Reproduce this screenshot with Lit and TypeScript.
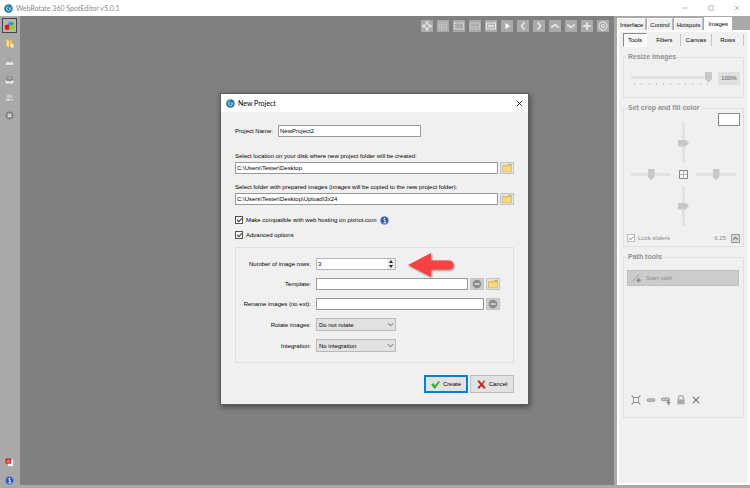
import { LitElement, html, svg, css, nothing } from "lit";
import { customElement, property } from "lit/decorators.js";

const glyphs: Record<string, unknown> = {
  logo: svg`<circle cx="8" cy="8" r="7.6" fill="#1d6f9c"/><path d="M3 5a6 6 0 0 1 6-3L7 6 4 9z" fill="#35b6a5"/><path d="M5 6v3a3 3 0 0 0 6 0V7H8" fill="none" stroke="#d9f1fa" stroke-width="1.6"/><path d="M12 4a6 6 0 0 1 0 8" fill="none" stroke="#4aa3d6" stroke-width="1.5"/>`,
  blocks: svg`<path d="M5 2l4-1 3 2-1 5H5z" fill="#3f9ff0"/><path d="M10 1l6 4-5 3z" fill="#1faa2c"/><path d="M0 7l6-1 2 2v7l-6 1-2-2z" fill="#e01818"/><path d="M8 9l5-2 3 2v5l-5 2-3-2z" fill="#83d321"/>`,
  book: svg`<path d="M2 1l6 1v13l-6-2z" fill="#f9dc8b" stroke="#d9a53c"/><path d="M8 2h5v11H8z" fill="#efc25a" stroke="#d9a53c"/><path d="M10 9h5v6h-5z" fill="#fff1c4"/>`,
  tray1: svg`<path d="M3 7l2-4h6l2 4 2 3v4H1v-4z" fill="#c8c8c8" stroke="#8c8c8c"/><circle cx="8" cy="5" r="3" fill="#aaa" stroke="#888"/><path d="M1 10h14v4H1z" fill="#e6e6e6"/>`,
  tray2: svg`<path d="M3 2h10l2 7v6H1V9z" fill="#8f8f8f"/><path d="M1 9l4 2h6l4-2v6H1z" fill="#ececec"/><path d="M6 4h4l-2 4z" fill="#ccc"/>`,
  drive: svg`<path d="M2 2h12v8H2z" fill="#c4c4c4" stroke="#a0a0a0"/><path d="M1 10h14v4H1z" fill="#ececec" stroke="#999"/><path d="M9 12h4" stroke="#888"/>`,
  closeDisc: svg`<circle cx="8" cy="8" r="6.5" fill="#8a8a8a" stroke="#777"/><path d="M5 5l6 6M11 5l-6 6" stroke="#eee" stroke-width="2"/>`,
  pdf: svg`<path d="M5 2h10v13H5z" fill="#fff" stroke="#999"/><path d="M1 1h10v9H1z" fill="#d51313"/><path d="M3 8l3-5 3 4H4" fill="none" stroke="#fff"/>`,
  info: svg`<circle cx="8" cy="8" r="7" fill="#2554c7" stroke="#8d9bd0"/><circle cx="8" cy="4.5" r="1.4" fill="#fff"/><path d="M6 7h3v5M6 12.2h5" fill="none" stroke="#fff" stroke-width="1.7"/>`,
  target: svg`<circle cx="8" cy="8" r="3"/><path d="M8 1v4M8 11v4M1 8h4M11 8h4M6 3h4M6 13h4M3 6v4M13 6v4"/>`,
  grid: svg`<path d="M3 3h10v10H3zM3 6.3h10M3 9.6h10M6.3 3v10M9.6 3v10" stroke-width=".8" opacity=".6"/>`,
  marquee: svg`<path d="M2 4h12v8H2z" stroke-dasharray="2 1.2"/>`,
  halfFrame: svg`<path d="M2 4h12v8H2zM4 9h8" stroke-width="1.2" opacity=".5"/>`,
  frame: svg`<path d="M2 4h12v8H2zM5 7h6v2H5z"/>`,
  play: svg`<path d="M6 4l6 4-6 4z" fill="#fff" stroke="none"/>`,
  left: svg`<path d="M10 3L6 8l4 5" stroke-width="2.2"/>`,
  right: svg`<path d="M6 3l4 5-4 5" stroke-width="2.2"/>`,
  up: svg`<path d="M3 10l5-4 5 4" stroke-width="2.2"/>`,
  down: svg`<path d="M3 6l5 4 5-4" stroke-width="2.2"/>`,
  chevron: svg`<path d="M2 5l6 6 6-6" stroke-width="1.8"/>`,
  plus: svg`<path d="M8 3v10M3 8h10" stroke-width="2.6"/>`,
  ring: svg`<circle cx="8" cy="8" r="5.4"/><circle cx="8" cy="8" r="2"/>`,
  folder: svg`<path d="M1 4h8l1-2h5v12H1z" fill="#efcb6c" stroke="#d6a846"/><path d="M1.500 6h13v7.500h-13z" fill="#f6d980"/><path d="M11 2.500h3" stroke="#6aa84f"/>`,
  minus: svg`<circle cx="8" cy="8" r="7" fill="#8b8b8b"/><path d="M4 8h8" stroke="#d8d8d8" stroke-width="2.6"/>`,
  check: svg`<path d="M1 8l3-2 3 4 7-8 1 2-8 11H6z" fill="#2fb52f" stroke="#1b8f22" stroke-width=".8"/>`,
  cross: svg`<path d="M1 2l3-1 4 5 5-5 1 1-4 5 5 7-3 1-4-5-4 5-3-1 5-6z" fill="#cf2020" stroke="#9c1515" stroke-width=".6"/>`,
  close: svg`<path d="M2 2l12 12M14 2L2 14" fill="none" stroke="currentColor" stroke-width="1.7"/>`,
  minimise: svg`<path d="M1 8h14" stroke="currentColor" stroke-width="1.5"/>`,
  maximise: svg`<path d="M2 2h12v12H2z" fill="none" stroke="currentColor" stroke-width="1.5"/>`,
  cells: svg`<path d="M1 1h14v14H1z" fill="#fff" stroke="#777" stroke-width="1.7"/><path d="M8 1v14M1 8h14" stroke="#aaa" stroke-width="1.7"/>`,
  caretBox: svg`<path d="M1 1h14v14H1z" fill="#ddd" stroke="#8c8c8c" stroke-width="1.6"/><path d="M4 10l4-4 4 4" fill="none" stroke="#777" stroke-width="2"/>`,
  pen: svg`<path d="M1 14c3 0 3-3 5-5l7-7" fill="none" stroke="#999" stroke-width="1.5"/><path d="M12 8v7M8.500 11.500h7" stroke="#888" stroke-width="2.6"/>`,
  bounds: svg`<path d="M4 4h8v8H4z" fill="none" stroke="#8b8b8b" stroke-width="1.4"/><path d="M1 1l3 3M15 1l-3 3M1 15l3-3M15 15l-3-3" stroke="#8b8b8b" stroke-width="2"/>`,
  link: svg`<rect x="1" y="5" width="14" height="6" rx="3" fill="#a6a6a6"/><path d="M4 8h3M9 8h3" stroke="#ddd" stroke-width="1.4"/>`,
  linkAdd: svg`<rect x="0" y="4" width="14" height="6" rx="3" fill="#a6a6a6"/><path d="M3 7h3M8 7h3" stroke="#ddd" stroke-width="1.4"/><path d="M12 8v8M9 12h6" stroke="#888" stroke-width="2.4"/>`,
  lock: svg`<path d="M4 8V5a4 4 0 0 1 8 0v3" fill="none" stroke="#aaa" stroke-width="2"/><path d="M2 7h12v8H2z" fill="#b0b0b0"/><path d="M6 8v6M10 8v6" stroke="#8e8e8e"/>`,
  crossGrey: svg`<path d="M3 3l10 10M13 3L3 13" stroke="#7d7d7d" stroke-width="2.2"/>`,
};

@customElement("ui-glyph")
export class UiGlyph extends LitElement {
  static styles = css`
    :host { display: block; width: 9px; height: 9px; flex: none; }
    svg { display: block; width: 100%; height: 100%; }
  `;
  @property() name = "";
  render() {
    return html`<svg viewBox="0 0 16 16" aria-hidden="true">${glyphs[this.name] ?? nothing}</svg>`;
  }
}

@customElement("app-root")
export class AppRoot extends LitElement {
  static styles = css`
    :host {
      --ui: "Liberation Sans", Arial, sans-serif;
      --title: Lato, sans-serif;
      display: flex;
      flex-direction: column;
      min-height: 100vh;
      position: relative;
      background: #a9a9a9;
      color: #000;
      font: 6px/10px var(--ui);
    }
    *, *::before, *::after { box-sizing: border-box; }
    button, input, select { font: inherit; color: inherit; margin: 0; padding: 0; border-radius: 0; }
    button { display: flex; align-items: center; justify-content: center; border: 0; background: none; }
    label { white-space: nowrap; }
    fieldset { min-width: 0; margin: 0; }

    .titlebar {
      display: flex; align-items: center; gap: 3px;
      height: 16px; padding: 0 10px 0 4px;
      background: #fff; color: #888; font: 7px/10px var(--title);
    }
    .titlebar h1 { flex: 1; margin: 0; font: inherit; }
    .window-buttons { display: flex; gap: 20px; }
    .window-buttons ui-glyph { width: 6px; height: 6px; }
    .work { flex: 1; display: flex; }

    .rail {
      width: 20px; display: flex; flex-direction: column; gap: 3px;
      padding: 2px 3px 0 2px;
    }
    .rail button { width: 15px; height: 15px; }
    .rail .current { border: 1px solid #444; background: #b5b5b5; }
    .rail .spacer { flex: 1; }

    .stage { flex: 1; min-width: 0; margin-bottom: 3px; background: #808080; padding: 4px 5px 0; }
    .stage-tools { display: flex; justify-content: flex-end; gap: 4px; }
    .stage-tools button { width: 12px; height: 12px; background: #aaa; }
    .stage-tools ui-glyph { width: 12px; height: 12px; fill: none; stroke: #e6e6e6; stroke-width: 1.5; }

    .side { width: 136px; display: flex; flex-direction: column; padding: 1px 0 3px 3px; }
    .tabs { display: flex; align-items: flex-end; height: 13px; gap: 1px; }
    .tabs button { height: 12px; padding: 0 2px; background: #f0f0f0; border: 1px solid #fff; border-right-color: #bbb; border-bottom: 0; }
    .tabs .open { height: 13px; background: #fff; border-color: #fff; padding: 0 3px; }
    .tabpage {
      flex: 1; display: flex; flex-direction: column; gap: 5px;
      background: #f0f0f0; border: 2px solid #fff; padding: 1px 4px 0;
    }
    .subtabs { display: flex; height: 14px; align-items: center; }
    .subtabs button { flex: 1; height: 12px; border-right: 1px solid #c4c4c4; }
    .subtabs .open { flex: none; width: 24px; height: 14px; border: 1px solid #fff; border-top-color: #888; border-left-color: #888; background: #f8f8f8; margin-right: 2px; }

    .group { border: 1px solid #e0e0e0; padding: 0 3px; color: #888; }
    .group legend { margin-left: 0; padding: 0 1px; font-size: 7px; font-weight: bold; color: #909090; }
    .resize { min-height: 46px; }
    .resize-row { display: flex; align-items: center; gap: 6px; padding: 9px 0 0 4px; }
    .resize-slider { flex: 1; }
    .ticks { display: flex; justify-content: space-between; padding: 0 4px 0 3px; }
    .ticks i { width: 1px; height: 2px; background: #c8c8c8; }
    .percent { width: 22px; height: 13px; background: #e0e0e0; color: #555; }

    input[type="range"] { appearance: none; display: block; width: 100%; height: 12px; background: none; }
    input[type="range"]::-webkit-slider-runnable-track {
      height: 3px; background: #e2e2e2;
    }
    input[type="range"]::-webkit-slider-thumb {
      appearance: none; width: 7px; height: 11px; margin-top: -4px; background: #c8c8c8;
      clip-path: polygon(0 0, 100% 0, 100% 70%, 50% 100%, 0 70%);
    }
    input.upright { writing-mode: vertical-lr; width: 12px; height: 40px; }
    input.upright::-webkit-slider-runnable-track { width: 3px; height: 100%; }
    input.upright::-webkit-slider-thumb {
      width: 11px; height: 7px; margin: 0 0 0 -4px;
      clip-path: polygon(0 0, 70% 0, 100% 50%, 70% 100%, 0 100%);
    }

    .crop { min-height: 144px; }
    .crop-grid { display: grid; grid-template: 50px 23px 40px / 40px 1fr 44px; padding-left: 4px; align-items: center; justify-items: center; }
    .crop-grid .north { grid-area: 1 / 2; align-self: end; }
    .crop-grid .swatch { grid-area: 1 / 3; align-self: start; justify-self: end; width: 22px; height: 13px; background: #fff; border: 1px solid #8a8a8a; }
    .crop-grid .west { grid-area: 2 / 1; }
    .crop-grid .middle { grid-area: 2 / 2; }
    .crop-grid .east { grid-area: 2 / 3; width: 40px; justify-self: start; }
    .crop-grid .south { grid-area: 3 / 2; }
    .lock-row { display: flex; align-items: center; gap: 5px; padding-top: 7px; }
    .lock-row label { flex: 1; }

    .check { display: flex; align-items: center; gap: 3px; }
    input[type="checkbox"] {
      appearance: none; width: 8px; height: 8px; border: 1px solid #555; background: #fff;
      display: grid; place-items: center;
    }
    input[type="checkbox"]::before {
      content: ""; width: 5px; height: 3px; border: solid #333; border-width: 0 0 1px 1px; transform: rotate(-45deg);
      margin-top: -2px;
    }
    .muted input { border-color: #bbb; }
    .muted input::before { border-color: #aaa; }

    .path { height: 166px; display: flex; flex-direction: column; }
    .start { width: 112px; height: 16px; margin-top: 8px; background: #ccc; border: 1px solid #bfbfbf; justify-content: flex-start; gap: 5px; padding: 0 3px; color: #8c8c8c; }
    .start ui-glyph { width: 10px; height: 10px; }
    .path-tools { display: flex; gap: 5px; padding: 109px 0 0 4px; }
    .path-tools ui-glyph { width: 10px; height: 10px; }

    .overlay { position: absolute; inset: 0; display: grid; place-items: center; padding: 10px 1px 0 0; }
    .dialog {
      width: 307px; background: #f0f0f0; outline: 1px solid #5c5c5c;
      box-shadow: 1px 2px 6px 1px rgba(0, 0, 0, 0.45);
    }
    .dialog header { display: flex; align-items: center; gap: 3px; height: 18px; padding: 0 5px; background: #fff; font: 7px/10px var(--title); }
    .dialog h2 { flex: 1; margin: 0; font: inherit; }
    .dialog header button ui-glyph { width: 7px; height: 7px; }
    .form { display: flex; flex-direction: column; padding: 13px 14px 11px; }
    .field { display: flex; align-items: center; gap: 2px; }
    .field input { flex: 1; min-width: 0; }
    .name label { width: 41px; }
    .name input { flex: none; width: 143px; }
    .form input[type="text"], .form input[type="number"] {
      height: 12px; border: 1px solid #999; background: #fff; padding: 0 1px;
    }
    .caption { padding: 14px 0 1px; }
    .caption.next { padding-top: 8px; }
    .tool { width: 14px; height: 12px; border: 1px solid #c4c4c4; background: #e4e4e4; }
    .tool.off { background: #ccc; }
    .tool ui-glyph { width: 10px; height: 10px; }
    .checks { display: flex; flex-direction: column; gap: 5px; padding: 10px 0 7px; }
    .checks .line { display: flex; align-items: center; gap: 4px; height: 10px; }

    .advanced {
      display: grid; grid-template-columns: 75px 1fr; column-gap: 5px; row-gap: 8px; align-items: center;
      border: 1px solid #dfdfdf; padding: 10px 13px 10px 0; height: 116px; align-content: start;
    }
    .advanced > label { text-align: right; }
    .spin { position: relative; display: flex; width: 80px; height: 12px; border: 1px solid #b5b5bd; background: #fff; }
    .spin input[type="number"] { appearance: textfield; flex: 1; min-width: 0; height: 10px; border: 0; }
    .spin input::-webkit-inner-spin-button { display: none; }
    .steps { display: flex; flex-direction: column; width: 8px; background: #eee; }
    .steps button { flex: 1; }
    .steps button::before { content: ""; border: 2px solid transparent; border-top: 0; border-bottom: 3px solid #222; }
    .steps button:last-child::before { border-top: 3px solid #222; border-bottom: 0; }
    .arrow { position: absolute; left: 90px; top: -7px; width: 48px; height: 26px; filter: drop-shadow(1px 1px 1px rgba(0, 0, 0, 0.45)); }
    .pick { position: relative; width: 80px; }
    .pick select { display: block; appearance: none; width: 100%; height: 13px; border: 1px solid #b8b8b8; background: #e2e2e2; padding: 0 2px; }
    .pick ui-glyph { position: absolute; right: 2px; top: 3px; width: 7px; height: 7px; fill: none; stroke: #444; pointer-events: none; }

    .actions { display: flex; justify-content: flex-end; gap: 2px; padding-top: 12px; }
    .actions button { width: 44px; height: 18px; background: #e2e2e2; border: 1px solid #bdbdbd; gap: 3px; }
    .actions .primary { border: 2px solid #0c7cd5; }
  `;

  render() {
    const stageTools = ["target", "grid", "marquee", "halfFrame", "frame", "play", "left", "right", "up", "down", "plus", "ring"];
    const rail = ["blocks", "book", "tray1", "tray2", "drive", "closeDisc"];
    const iconButton = (name: string, cls = "") =>
      html`<button class=${cls} aria-label=${name}><ui-glyph name=${name}></ui-glyph></button>`;
    return html`
      <header class="titlebar">
        <ui-glyph name="logo"></ui-glyph>
        <h1>WebRotate 360 SpotEditor v5.0.1</h1>
        <div class="window-buttons">
          ${["minimise", "maximise", "close"].map((n) => iconButton(n))}
        </div>
      </header>
      <div class="work">
        <nav class="rail">
          ${rail.map((n, i) => iconButton(n, i === 0 ? "current" : ""))}
          <div class="spacer"></div>
          ${iconButton("pdf")}${iconButton("info")}
        </nav>
        <main class="stage">
          <div class="stage-tools">${stageTools.map((n) => iconButton(n))}</div>
        </main>
        <aside class="side">
          <div class="tabs">
            ${["Interface", "Control", "Hotspots", "Images"].map((t) => html`<button class=${t === "Images" ? "open" : ""}>${t}</button>`)}
          </div>
          <div class="tabpage">
            <div class="subtabs">
              ${["Tools", "Filters", "Canvas", "Rows"].map((t) => html`<button class=${t === "Tools" ? "open" : ""}>${t}</button>`)}
            </div>
            <fieldset class="group resize">
              <legend>Resize images</legend>
              <div class="resize-row">
                <div class="resize-slider">
                  <input type="range" value="100" aria-label="Image size" />
                  <div class="ticks">${Array.from({ length: 11 }, () => html`<i></i>`)}</div>
                </div>
                <button class="percent">100%</button>
              </div>
            </fieldset>
            <fieldset class="group crop">
              <legend>Set crop and fill color</legend>
              <div class="crop-grid">
                <input class="upright north" type="range" value="50" aria-label="Crop top" />
                <button class="swatch" aria-label="Fill color"></button>
                <input class="west" type="range" value="50" aria-label="Crop left" />
                <ui-glyph class="middle" name="cells"></ui-glyph>
                <input class="east" type="range" value="50" aria-label="Crop right" />
                <input class="upright south" type="range" value="50" aria-label="Crop bottom" />
              </div>
              <div class="lock-row">
                <label class="check muted"><input type="checkbox" checked />Lock sliders</label>
                <span>0.25</span>
                ${iconButton("caretBox")}
              </div>
            </fieldset>
            <fieldset class="group path">
              <legend>Path tools</legend>
              <button class="start"><ui-glyph name="pen"></ui-glyph>Start path</button>
              <div class="path-tools">
                ${["bounds", "link", "linkAdd", "lock", "crossGrey"].map((n) => iconButton(n))}
              </div>
            </fieldset>
          </div>
        </aside>
      </div>
      <div class="overlay">
        <section class="dialog" role="dialog" aria-labelledby="dialog-title">
          <header>
            <ui-glyph name="logo"></ui-glyph>
            <h2 id="dialog-title">New Project</h2>
            ${iconButton("close")}
          </header>
          <div class="form">
            <div class="field name">
              <label for="name">Project Name:</label>
              <input id="name" type="text" value="NewProject2" />
            </div>
            <label class="caption" for="location">Select location on your disk where new project folder will be created:</label>
            <div class="field">
              <input id="location" type="text" value="C:\\Users\\Tester\\Desktop" />
              ${iconButton("folder", "tool")}
            </div>
            <label class="caption next" for="images">Select folder with prepared images (images will be copied to the new project folder):</label>
            <div class="field">
              <input id="images" type="text" value="C:\\Users\\Tester\\Desktop\\Upload\\3x24" />
              ${iconButton("folder", "tool")}
            </div>
            <div class="checks">
              <div class="line">
                <label class="check"><input type="checkbox" checked />Make compatible with web hosting on pixriot.com</label>
                ${iconButton("info")}
              </div>
              <div class="line">
                <label class="check"><input type="checkbox" checked />Advanced options</label>
              </div>
            </div>
            <div class="advanced">
              <label for="rows">Number of image rows:</label>
              <div class="spin">
                <input id="rows" type="number" value="3" />
                <div class="steps"><button aria-label="More"></button><button aria-label="Fewer"></button></div>
                <svg class="arrow" viewBox="0 0 48 26" aria-hidden="true">
                  <path d="M1 13L24 1v7.500h18a4.500 4.500 0 0 1 0 9H24V25z" fill="#fb4141" />
                </svg>
              </div>
              <label for="template">Template:</label>
              <div class="field">
                <input id="template" type="text" />
                ${iconButton("minus", "tool off")}${iconButton("folder", "tool")}
              </div>
              <label for="rename">Rename images (no ext):</label>
              <div class="field">
                <input id="rename" type="text" />
                ${iconButton("minus", "tool off")}
              </div>
              <label for="rotate">Rotate images:</label>
              <div class="pick">
                <select id="rotate"><option>Do not rotate</option></select>
                <ui-glyph name="chevron"></ui-glyph>
              </div>
              <label for="integration">Integration:</label>
              <div class="pick">
                <select id="integration"><option>No integration</option></select>
                <ui-glyph name="chevron"></ui-glyph>
              </div>
            </div>
            <div class="actions">
              <button class="primary"><ui-glyph name="check"></ui-glyph>Create</button>
              <button><ui-glyph name="cross"></ui-glyph>Cancel</button>
            </div>
          </div>
        </section>
      </div>
    `;
  }
}
